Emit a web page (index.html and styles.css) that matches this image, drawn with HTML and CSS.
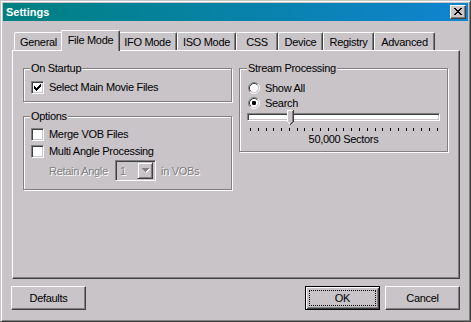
FILE: index.html
```html
<!DOCTYPE html>
<html>
<head>
<meta charset="utf-8">
<title>Settings</title>
<link rel="stylesheet" href="styles.css">
</head>
<body>
<div class="window">
  <div class="titlebar">
    <span class="title">Settings</span>
    <span class="close">
      <svg width="8" height="7" viewBox="0 0 8 7" shape-rendering="crispEdges"><path d="M0 0h2v1h-2z M6 0h2v1h-2z M1 1h2v1h-2z M5 1h2v1h-2z M2 2h4v1h-4z M3 3h2v1h-2z M2 4h4v1h-4z M1 5h2v1h-2z M5 5h2v1h-2z M0 6h2v1h-2z M6 6h2v1h-2z" fill="#000"/></svg>
    </span>
  </div>
  <div class="client">
    <div class="tabs">
      <div class="tab t1">General</div>
      <div class="tab t2 sel">File Mode</div>
      <div class="tab t3">IFO Mode</div>
      <div class="tab t4">ISO Mode</div>
      <div class="tab t5">CSS</div>
      <div class="tab t6">Device</div>
      <div class="tab t7">Registry</div>
      <div class="tab t8">Advanced</div>
    </div>
    <div class="panel">
      <div class="col">
        <div class="group g-startup">
          <span class="legend">On Startup</span>
          <label class="check first">
            <span class="cb"><svg width="7" height="7" viewBox="0 0 7 7" shape-rendering="crispEdges"><path d="M6 0h1v1h-1z M5 1h2v1h-2z M0 2h1v1h-1z M4 2h3v1h-3z M0 3h2v1h-2z M3 3h3v1h-3z M0 4h5v1h-5z M1 5h3v1h-3z M2 6h1v1h-1z" fill="#000"/></svg></span>
            <span>Select Main Movie Files</span>
          </label>
        </div>
        <div class="group g-options">
          <span class="legend">Options</span>
          <label class="check first2">
            <span class="cb"></span>
            <span>Merge VOB Files</span>
          </label>
          <label class="check">
            <span class="cb"></span>
            <span>Multi Angle Processing</span>
          </label>
          <div class="retain">
            <span class="disabled r-label">Retain Angle</span>
            <span class="combo">
              <span class="combo-val disabled">1</span>
              <span class="combo-btn"><svg width="8" height="5" viewBox="0 0 8 5" shape-rendering="crispEdges"><path d="M1 1h7v1h-7z M2 2h5v1h-5z M3 3h3v1h-3z M4 4h1v1h-1z" fill="#fff"/><path d="M0 0h7v1h-7z M1 1h5v1h-5z M2 2h3v1h-3z M3 3h1v1h-1z" fill="#808080"/></svg></span>
            </span>
            <span class="disabled">in VOBs</span>
          </div>
        </div>
      </div>
      <div class="col">
        <div class="group g-stream">
          <span class="legend">Stream Processing</span>
          <label class="radio first3">
            <svg class="rb" width="12" height="12" viewBox="0 0 12 12"><circle cx="6" cy="6" r="4.5" fill="#fff"/><path d="M2.11 9.89A5.5 5.5 0 0 1 9.89 2.11" fill="none" stroke="#808080"/><path d="M9.89 2.11A5.5 5.5 0 0 1 2.11 9.89" fill="none" stroke="#fff"/><path d="M2.82 9.18A4.5 4.5 0 0 1 9.18 2.82" fill="none" stroke="#404040"/><path d="M9.18 2.82A4.5 4.5 0 0 1 2.82 9.18" fill="none" stroke="#c8c4c8"/></svg>
            <span>Show All</span>
          </label>
          <label class="radio">
            <svg class="rb" width="12" height="12" viewBox="0 0 12 12"><circle cx="6" cy="6" r="4.5" fill="#fff"/><path d="M2.11 9.89A5.5 5.5 0 0 1 9.89 2.11" fill="none" stroke="#808080"/><path d="M9.89 2.11A5.5 5.5 0 0 1 2.11 9.89" fill="none" stroke="#fff"/><path d="M2.82 9.18A4.5 4.5 0 0 1 9.18 2.82" fill="none" stroke="#404040"/><path d="M9.18 2.82A4.5 4.5 0 0 1 2.82 9.18" fill="none" stroke="#c8c4c8"/><rect x="4" y="4" width="4" height="4" rx="1.2" fill="#000"/></svg>
            <span>Search</span>
          </label>
          <div class="slider">
            <div class="track"></div>
            <svg class="thumb" width="7" height="16" viewBox="0 0 7 16" shape-rendering="crispEdges"><path d="M0 0h7v12l-3.5 3.5L0 12z" fill="#c8c4c8"/><path d="M0 0h6v1h-5v11h-1z M1 12h1v1h-1z M2 13h1v1h-1z" fill="#fff"/><path d="M6 0h1v12h-1z M5 12h1v1h-1z M4 13h1v1h-1z M3 14h1v1h-1z" fill="#404040"/><path d="M5 1h1v11h-1z M4 12h1v1h-1z M3 13h1v1h-1z" fill="#808080"/></svg>
          </div>
          <div class="ticks">
            <i></i><i></i><i></i><i></i><i></i><i></i><i></i><i></i><i></i><i></i><i></i><i></i><i></i><i></i><i></i><i></i><i></i><i></i><i></i><i></i><i></i><i></i><i></i><i></i><i></i>
          </div>
          <div class="slider-label">50,000 Sectors</div>
        </div>
      </div>
    </div>
    <div class="buttons">
      <span class="btn">Defaults</span>
      <span class="spacer"></span>
      <span class="btn default"><span class="focus">OK</span></span>
      <span class="btn">Cancel</span>
    </div>
  </div>
</div>
</body>
</html>
```

FILE: styles.css
```css
* { box-sizing: border-box; margin: 0; padding: 0; }
html, body { width: 471px; height: 322px; overflow: hidden; background: #c8c4c8; }
body { font-family: "Liberation Sans", Arial, sans-serif; font-size: 11px; color: #000; letter-spacing: -0.3px; }

.window {
  width: 471px; height: 322px;
  border: 1px solid; border-color: #c8c4c8 #404040 #404040 #c8c4c8;
  box-shadow: inset 1px 1px #fff, inset -1px -1px #808080;
  padding: 2px;
  display: flex; flex-direction: column;
}

.titlebar {
  height: 18px; flex: none;
  background: linear-gradient(to right, #008080, #1084d0);
  display: flex; align-items: center; justify-content: space-between;
  padding: 0 2px 0 3px;
}
.title { color: #fff; font-weight: bold; font-size: 11px; line-height: 13px; letter-spacing: 0; }
.close {
  width: 16px; height: 14px; background: #c8c4c8;
  border: 1px solid; border-color: #fff #404040 #404040 #fff;
  box-shadow: inset -1px -1px #808080;
  display: flex; align-items: flex-start; justify-content: flex-start;
  padding: 2px 0 0 3px;
}
.close svg { display: block; }

.client { flex: 1; display: flex; flex-direction: column; }

.tabs {
  display: flex; align-items: flex-end; height: 29px; flex: none;
  margin-left: 11px; position: relative; z-index: 1;
}
.tab {
  height: 18px; background: #c8c4c8;
  border-top: 1px solid #fff; border-left: 1px solid #fff; border-right: 1px solid #404040;
  box-shadow: inset -1px 0 #808080;
  border-radius: 2px 2px 0 0;
  display: flex; align-items: center; justify-content: center;
  line-height: 13px; white-space: nowrap; padding-top: 1px;
}
.tab.sel {
  height: 21px; margin: 0 -2px -1px; position: relative; z-index: 2;
  padding-top: 0; padding-bottom: 2px;
}
.t1 { width: 49px; }
.t2 { width: 59px; }
.t3 { width: 59px; }
.t4 { width: 59px; }
.t5 { width: 42px; }
.t6 { width: 45px; }
.t7 { width: 51px; }
.t8 { width: 61px; }

.panel {
  width: 448px; height: 229px; flex: none; margin-left: 9px;
  border: 1px solid; border-color: #fff #404040 #404040 #fff;
  box-shadow: inset -1px -1px #808080;
  display: flex; gap: 7px; padding: 17px 0 0 10px;
}
.col { display: flex; flex-direction: column; width: 209px; }

.group {
  border: 1px solid #808080;
  box-shadow: inset 1px 1px #fff, 1px 1px #fff;
  display: flex; flex-direction: column; align-items: flex-start;
  padding: 0 7px;
}
.g-startup { height: 34px; }
.g-options { height: 74px; margin-top: 14px; }
.g-stream { height: 84px; padding: 0 8px; }
.legend {
  margin: -7px 0 0 -1px; padding: 0 1px; background: #c8c4c8;
  line-height: 13px; height: 13px;
}

.check, .radio { display: flex; align-items: center; height: 13px; line-height: 13px; }
.check { gap: 5px; }
.radio { gap: 5px; height: 12px; }
.check.first { margin-top: 6px; }
.check.first2 { margin-top: 5px; }
.check + .check { margin-top: 4px; }
.radio.first3 { margin-top: 7px; }
.radio + .radio { margin-top: 3px; }
.rb { display: block; flex: none; }

.cb {
  width: 13px; height: 13px; flex: none; background: #fff;
  border: 1px solid; border-color: #808080 #fff #fff #808080;
  box-shadow: inset 1px 1px #404040, inset -1px -1px #c8c4c8;
  padding: 2px;
}
.cb svg { display: block; }

.retain { display: flex; align-items: center; margin-top: 2px; margin-left: 18px; }
.r-label { width: 60px; }
.disabled { color: #808080; text-shadow: 1px 1px #fff; }
.combo {
  width: 41px; height: 21px; margin: 0 5px 0 6px;
  background: #c8c4c8;
  border: 1px solid; border-color: #808080 #fff #fff #808080;
  box-shadow: inset 1px 1px #404040, inset -1px -1px #c8c4c8;
  display: flex; align-items: center; justify-content: space-between; padding: 2px;
}
.combo-val { padding-left: 2px; }
.combo-btn {
  width: 16px; height: 17px; background: #c8c4c8;
  border: 1px solid; border-color: #c8c4c8 #404040 #404040 #c8c4c8;
  box-shadow: inset 1px 1px #fff, inset -1px -1px #808080;
  display: flex; align-items: center; justify-content: center; padding-left: 1px;
}
.combo-btn svg { display: block; }

.slider { position: relative; margin: 1px 0 0 -1px; width: 193px; height: 16px; }
.track {
  width: 193px; height: 8px; margin-top: 3px; background: #fff;
  border: 1px solid; border-color: #808080 #fff #fff #808080;
  box-shadow: inset 1px 1px #404040, inset -1px -1px #c8c4c8;
}
.thumb { position: absolute; left: 40px; top: 0; display: block; }

.ticks { display: flex; justify-content: space-between; width: 188px; height: 3px; margin: 2px 0 0 2px; }
.ticks i { width: 1px; height: 3px; background: #000; }

.slider-label { align-self: stretch; text-align: center; line-height: 13px; margin-top: 2px; }

.buttons { display: flex; margin: 7px 8px 0 8px; gap: 5px; }
.spacer { flex: 1; }
.btn {
  width: 75px; height: 24px; flex: none; background: #c8c4c8;
  border: 1px solid; border-color: #fff #404040 #404040 #fff;
  box-shadow: inset -1px -1px #808080;
  display: flex; align-items: center; justify-content: center; line-height: 13px;
}
.btn.default {
  border-color: #000;
  box-shadow: inset 1px 1px #fff, inset -1px -1px #404040, inset 2px 2px #c8c4c8, inset -2px -2px #808080;
  padding: 3px;
}
.focus {
  flex: 1; align-self: stretch; outline: 1px dotted #000; outline-offset: -1px;
  display: flex; align-items: center; justify-content: center;
}
```
